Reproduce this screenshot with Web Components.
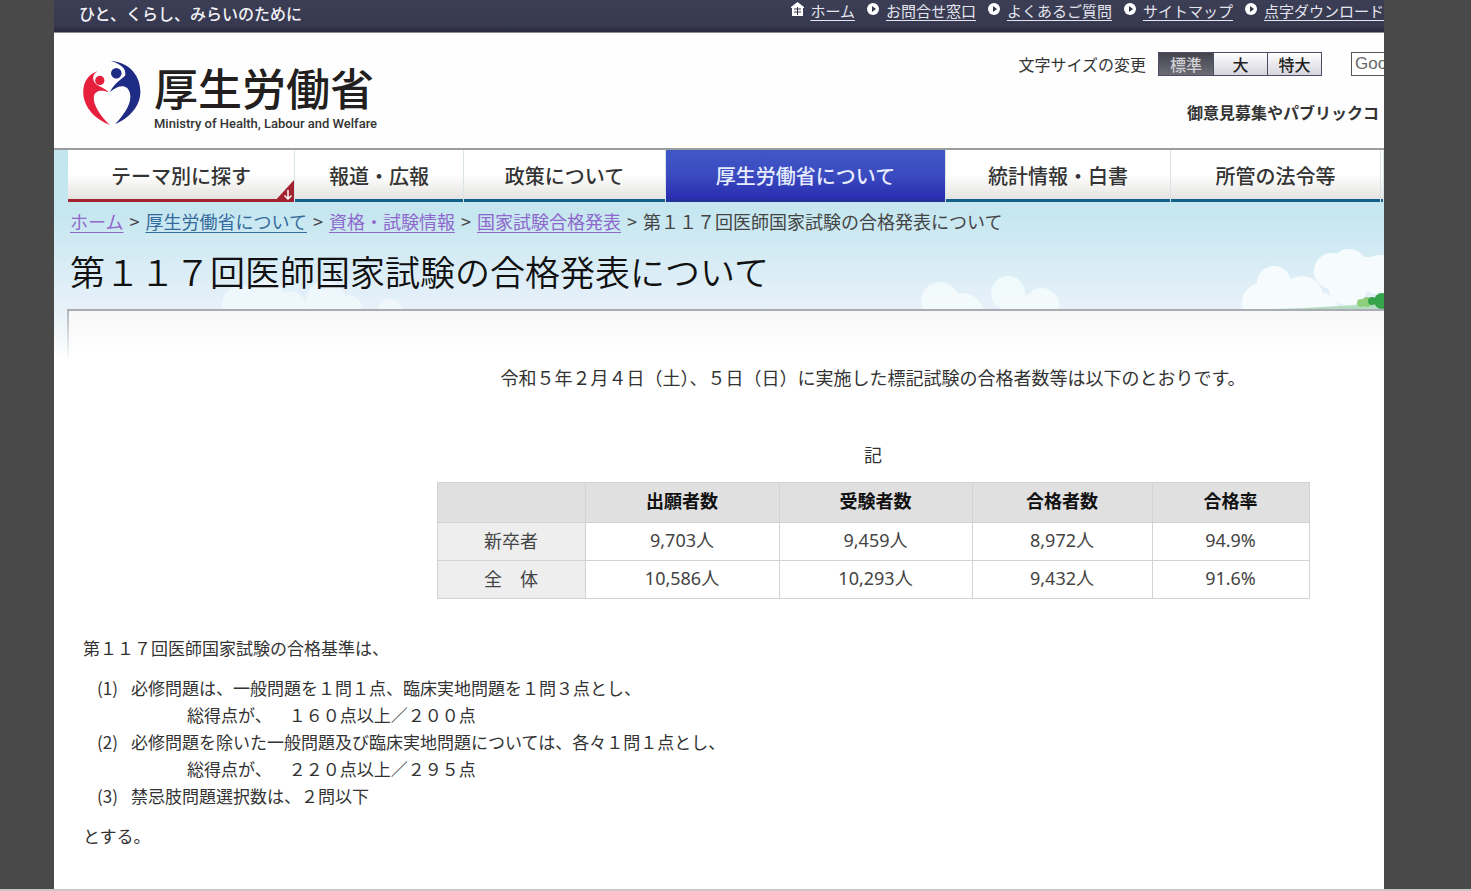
<!DOCTYPE html>
<html lang="ja">
<head>
<meta charset="utf-8">
<title>第１１７回医師国家試験の合格発表について</title>
<style>
html{background:#494949}
body{margin:0;font-family:"Noto Sans CJK JP",sans-serif;font-size:18px;line-height:27px;color:#333}
</style>
</head>
<body>
<mhlw-page></mhlw-page>
<script>
function define(name, html, setup){
  const t=document.createElement('template');
  t.innerHTML=html;
  customElements.define(name,class extends HTMLElement{
    constructor(){
      super();
      this.attachShadow({mode:'open'}).append(t.content.cloneNode(true));
    }
    connectedCallback(){ if(setup) setup(this,this.shadowRoot); }
  });
}

define('top-link',`<style>
:host{display:flex;align-items:center;gap:6px}
svg{width:13px;height:14px;flex:none;margin-bottom:4px}
a{color:#e4e5ee;font-size:15px;line-height:20px;white-space:nowrap;text-underline-offset:3px}
.home,:host([icon=home]) .dot{display:none}
:host([icon=home]) .home{display:block}
</style>
<svg class="dot" viewBox="0 0 13 14" aria-hidden="true"><ellipse cx="6" cy="7" rx="6" ry="6" fill="#fff"/><path d="M5 4l4 3-4 3z" fill="#34364a"/></svg>
<svg class="home" viewBox="0 0 13 14" aria-hidden="true"><path d="M6.500 0L13 5v1h-1v8H1V6H0V5z" fill="#fff"/><path d="M3 7h7M3 10h7M6.500 5v8" stroke="#34364a"/></svg>
<a href="#"><slot></slot></a>`);

define('top-bar',`<style>
:host{display:flex;justify-content:space-between;align-items:flex-start;height:33px;box-sizing:border-box;padding-left:25px;padding-top:1px;background:linear-gradient(#3c3e55,#373950 80%,#28293c);border-bottom:1px solid #8a8a92;overflow:hidden}
.tag{font-size:16px;line-height:24px;font-weight:500;color:#f2f2f6}
nav{display:flex;gap:12px}
</style>
<span class="tag">ひと、くらし、みらいのために</span>
<nav aria-label="補助">
<top-link icon="home">ホーム</top-link><top-link>お問合せ窓口</top-link><top-link>よくあるご質問</top-link><top-link>サイトマップ</top-link><top-link>点字ダウンロード</top-link>
</nav>`);

define('site-logo',`<style>
:host{display:flex;align-items:flex-start;gap:12px}
svg{width:60px;height:68px;margin-top:2px}
.text{padding-top:9px}
.name{font-family:"Liberation Sans","Noto Sans CJK JP",sans-serif;font-size:44px;line-height:50px;font-weight:500;color:#231f1e;white-space:nowrap}
.en{font:500 13px/16px Roboto,sans-serif;color:#333;white-space:nowrap}
</style>
<svg viewBox="84 176 180 206" aria-hidden="true">
<path fill="#1f2c86" d="M170 182C225 185 260 225 260 275C260 320 225 355 184 373C215 340 236 305 228 278C221 252 195 252 168 276C180 250 200 240 214 226C218 205 200 190 170 182Z"/>
<circle cx="187" cy="219" r="16" fill="#1f2c86"/>
<path fill="#e61f3c" d="M130 213C100 222 85 250 87 280C89 325 125 360 168 376C140 350 116 315 119 290C122 270 145 268 164 277C150 262 130 258 122 248C114 235 115 222 130 213Z"/>
<circle cx="137" cy="241" r="14" fill="#e61f3c"/>
</svg>
<div class="text"><div class="name">厚生労働省</div><div class="en">Ministry of Health, Labour and Welfare</div></div>`);

define('size-switch',`<style>
:host{display:flex;align-items:center;gap:12px;font-size:16px;line-height:24px}
.group{display:flex;border:1px solid #4c4c66}
button{all:unset;box-sizing:border-box;width:54px;height:22px;line-height:22px;text-align:center;font-weight:500;color:#222;background:linear-gradient(#fff,#d4d4dc)}
button+button{border-left:1px solid #4c4c66}
button[aria-pressed=true]{background:linear-gradient(#44444e,#6c6c76);color:#d0d0d4}
</style>
<span id="l">文字サイズの変更</span>
<div class="group" role="group" aria-labelledby="l"><button aria-pressed="true">標準</button><button>大</button><button>特大</button></div>`);

define('site-header',`<style>
:host{display:flex;justify-content:space-between;align-items:flex-start;height:117px;box-sizing:border-box;padding:24px 0 0 28px;background:#fefefe;border-bottom:2px solid #9a9c9e}
.tools{display:flex;flex-direction:column;align-items:flex-end;gap:24px}
.row{display:flex;align-items:center;gap:29px;margin-top:-5px}
input{box-sizing:border-box;width:33px;height:24px;border:1px solid #555;border-right:0;padding:0 0 0 3px;font:17px "Liberation Sans",sans-serif;background:#fff;border-radius:0}
input::placeholder{color:#666;opacity:1}
.note{width:197px;white-space:nowrap;font-size:16px;line-height:24px;font-weight:700;color:#333}
</style>
<site-logo></site-logo>
<div class="tools">
<div class="row"><size-switch></size-switch><input type="text" aria-label="検索" placeholder="Google"></div>
<div class="note">御意見募集やパブリックコ</div>
</div>`);

define('nav-tab',`<style>
:host{display:block;position:relative;min-width:0;overflow:hidden;border-right:1px solid #d8e4e6}
a{display:block;height:49px;line-height:52px;text-align:center;text-decoration:none;white-space:nowrap;color:#333;font-size:20px;font-weight:500;background:linear-gradient(#fff 50%,#e4e3df);border-bottom:3px solid #13608a}
:host([current]) a{color:#e8ecff;background:linear-gradient(#4157c8,#3a4cc0 50%,#2a2cb0);border-color:#23329a}
:host([theme]) a{border-color:#a3222f}
svg{display:none;position:absolute;right:0;bottom:0;width:20px;height:22px}
:host([theme]) svg{display:block}
</style>
<a href="#"><slot></slot></a>
<svg viewBox="0 0 20 22" aria-hidden="true"><path d="M20 0v22H0z" fill="#a3222f"/><path d="M14 10v9M10.500 15.500L14 19l3.500-3.500" fill="none" stroke="#fff" stroke-width="1.500"/></svg>`);

define('global-nav',`<style>
:host{display:block;padding-left:14px}
nav{display:grid;grid-template-columns:227fr 169fr 202fr 280fr 225fr 210fr 3fr}
</style>
<nav aria-label="メイン"><nav-tab theme>テーマ別に探す</nav-tab><nav-tab>報道・広報</nav-tab><nav-tab>政策について</nav-tab><nav-tab current>厚生労働省について</nav-tab><nav-tab>統計情報・白書</nav-tab><nav-tab>所管の法令等</nav-tab><nav-tab aria-hidden="true"></nav-tab></nav>`);

define('bread-crumbs',`<style>
:host{display:block}
nav{display:flex;align-items:center;line-height:27px;white-space:nowrap}
span{color:#444}
i{width:22px;text-align:center;font-style:normal;color:#444}
a{color:#8e68cc;text-underline-offset:3px}
a.new{color:#356a9c}
</style>
<nav aria-label="パンくず"><a href="#">ホーム</a><i>&gt;</i><a class="new" href="#">厚生労働省について</a><i>&gt;</i><a href="#">資格・試験情報</a><i>&gt;</i><a href="#">国家試験合格発表</a><i>&gt;</i><span>第１１７回医師国家試験の合格発表について</span></nav>`);

define('sky-scene',`<style>
:host{display:block;position:absolute;inset:auto 0 0 0;height:70px;overflow:hidden}
svg{position:absolute;bottom:0;height:70px}
.r{right:0;width:480px}.l{left:160px;width:200px;opacity:.6}
</style>
<svg class="l" viewBox="0 0 200 70" fill="#f6fdfd" aria-hidden="true"><circle cx="28" cy="66" r="20"/><circle cx="50" cy="58" r="20"/><circle cx="76" cy="68" r="16"/><circle cx="112" cy="62" r="20"/><circle cx="134" cy="70" r="14"/><circle cx="176" cy="72" r="12"/></svg>
<svg class="r" viewBox="0 0 480 70" aria-hidden="true"><g fill="#f6fdfd" opacity=".8"><circle cx="36" cy="62" r="19"/><circle cx="58" cy="76" r="22"/><circle cx="104" cy="54" r="17"/><circle cx="138" cy="66" r="17"/><circle cx="120" cy="72" r="16"/></g>
<g fill="#f6fcfd"><circle cx="358" cy="64" r="20"/><circle cx="370" cy="44" r="17"/><circle cx="398" cy="58" r="21"/><circle cx="380" cy="66" r="22"/><circle cx="418" cy="70" r="16"/><circle cx="428" cy="32" r="18"/><circle cx="445" cy="28" r="18"/><circle cx="462" cy="34" r="16"/><circle cx="444" cy="46" r="20"/><circle cx="476" cy="36" r="20"/></g>
<path d="M370 70Q430 68 480 64V70z" fill="#b4dcc0"/><g fill="#8fcf7c"><circle cx="457" cy="64" r="4"/><circle cx="463" cy="63" r="5"/></g><g fill="#35a44b"><circle cx="468" cy="62" r="4"/><circle cx="478" cy="62" r="8"/></g></svg>`);

define('page-hero',`<style>
:host{display:block;position:relative;height:159px;background:linear-gradient(#c3e6ee,#c6e7f0 40%,#e8f1fa)}
.text{position:relative;padding:6px 0 0 16px}
h1{margin:11px 0 0;font-size:35px;line-height:50px;font-weight:350;color:#111;white-space:nowrap}
</style>
<sky-scene></sky-scene>
<div class="text-wrap"><global-nav></global-nav><div class="text"><bread-crumbs></bread-crumbs><h1>第１１７回医師国家試験の合格発表について</h1></div></div>`);

define('result-table',`<style>
:host{display:block}
table{width:873px;max-width:100%;margin:0 auto;border-collapse:collapse;table-layout:fixed;font-family:"Noto Sans","Noto Sans CJK JP",sans-serif;color:#444}
th,td{box-sizing:border-box;height:38px;padding:0 0 4px;border:1px solid #d2d2d2;text-align:center;font-weight:400;line-height:24px}
thead th,thead td{height:40px;background:#e0e0e0;color:#111;font-weight:700}
tbody th{background:#eee;font-family:"Noto Sans CJK JP",sans-serif}
</style>
<table><colgroup><col style="width:148px"><col style="width:194px"><col style="width:193px"><col style="width:180px"><col style="width:157px"></colgroup>
<thead><tr><td></td><th scope="col">出願者数</th><th scope="col">受験者数</th><th scope="col">合格者数</th><th scope="col">合格率</th></tr></thead>
<tbody><tr><th scope="row">新卒者</th><td>9,703人</td><td>9,459人</td><td>8,972人</td><td>94.9%</td></tr>
<tr><th scope="row">全　体</th><td>10,586人</td><td>10,293人</td><td>9,432人</td><td>91.6%</td></tr></tbody></table>`);

define('criteria-item',`<style>
:host{display:grid;grid-template-columns:34px 1fr}
.sub{grid-column:2;padding-left:56px}
</style>
<span><slot name="no"></slot></span><span><slot></slot></span><div class="sub"><slot name="score"></slot></div>`,
(host,root)=>{ if(!host.querySelector('[slot=score]')) root.querySelector('.sub').remove(); });

define('pass-criteria',`<style>
:host{display:block;font-size:17px;text-spacing-trim:space-all}
p{margin:0}
.list{padding:13px 0 13px 14px}
</style>
<p>第１１７回医師国家試験の合格基準は、</p>
<div class="list">
<criteria-item><span slot="no">(1)</span>必修問題は、一般問題を１問１点、臨床実地問題を１問３点とし、<span slot="score">総得点が、　１６０点以上／２００点</span></criteria-item>
<criteria-item><span slot="no">(2)</span>必修問題を除いた一般問題及び臨床実地問題については、各々１問１点とし、<span slot="score">総得点が、　２２０点以上／２９５点</span></criteria-item>
<criteria-item><span slot="no">(3)</span>禁忌肢問題選択数は、２問以下</criteria-item>
</div>
<p>とする。</p>`);

define('page-content',`<style>
:host{display:flex;flex:1;background:linear-gradient(#e6f1f8,#fff 50px)}
.gutter{width:13px;flex:none}
main{flex:1;min-width:0;border-top:2px solid #a9adb3;background:linear-gradient(#b4b8bc,#fff 50px) left top/2px 50px no-repeat,linear-gradient(#f7f7f8,#fff 44px) #fff}
.center{padding:53px 0 0 295px;text-align:center}
p{margin:0}
.ki{margin:50px 0 14px}
pass-criteria{margin-top:35px;padding-left:16px}
</style>
<div class="gutter"></div>
<main><div class="center"><p>令和５年２月４日（土）、５日（日）に実施した標記試験の合格者数等は以下のとおりです。</p><p class="ki">記</p><result-table></result-table></div><pass-criteria></pass-criteria></main>`);

define('mhlw-page',`<style>
:host{min-height:100vh;box-sizing:border-box;border-bottom:2px solid #c8c8c8;display:flex}
.frame{flex:1;min-width:0;margin:0 87px 0 54px;background:#fff;overflow:hidden;display:flex;flex-direction:column}
</style>
<div class="frame"><top-bar></top-bar><site-header></site-header><page-hero></page-hero><page-content></page-content></div>`);
</script>
</body>
</html>
